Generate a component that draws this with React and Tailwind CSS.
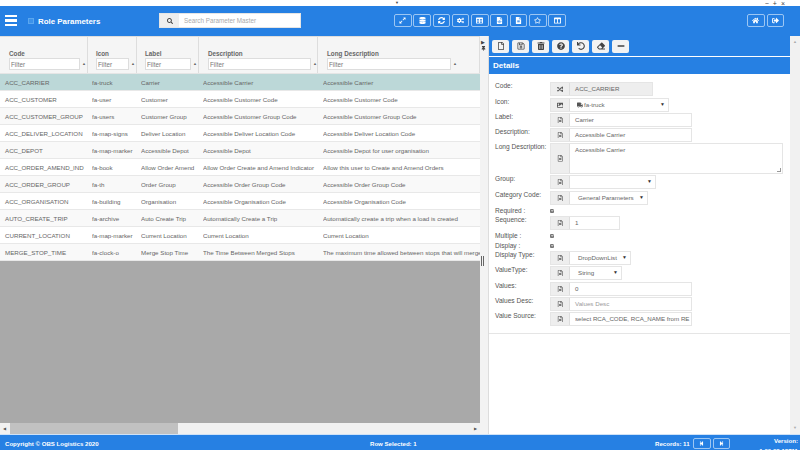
import {
  FaExpandAlt,
  FaDatabase,
  FaSyncAlt,
  FaCogs,
  FaTable,
  FaFileCode,
  FaFileAlt,
  FaRegStar,
  FaColumns,
  FaHome,
  FaSignOutAlt,
  FaRegFile,
  FaRegSave,
  FaTrashAlt,
  FaQuestionCircle,
  FaUndo,
  FaEraser,
  FaMinus,
  FaSearch,
  FaRandom,
  FaTruck,
  FaStepBackward,
  FaStepForward,
  FaThumbtack,
  FaImage,
  FaRegFileAlt,
  FaCheck,
} from "react-icons/fa";

const columns = [
  { name: "Code", width: "w-[88px]", left: "ml-[9px]", filter: "w-[71px]" },
  { name: "Icon", width: "w-[49px]", left: "ml-[8px]", filter: "w-[33px]" },
  { name: "Label", width: "w-[62px]", left: "ml-[8px]", filter: "w-[46px]" },
  { name: "Description", width: "w-[119px]", left: "ml-[9px]", filter: "w-[103px]" },
  { name: "Long Description", width: "w-[162px]", left: "ml-[9px]", filter: "w-[124px]" },
];

const rows = [
  ["ACC_CARRIER", "fa-truck", "Carrier", "Accessible Carrier", "Accessible Carrier"],
  ["ACC_CUSTOMER", "fa-user", "Customer", "Accessible Customer Code", "Accessible Customer Code"],
  ["ACC_CUSTOMER_GROUP", "fa-users", "Customer Group", "Accessible Customer Group Code", "Accessible Customer Group Code"],
  ["ACC_DELIVER_LOCATION", "fa-map-signs", "Deliver Location", "Accessible Deliver Location Code", "Accessible Deliver Location Code"],
  ["ACC_DEPOT", "fa-map-marker", "Accessible Depot", "Accessible Depot", "Accessible Depot for user organisation"],
  ["ACC_ORDER_AMEND_IND", "fa-book", "Allow Order Amend", "Allow Order Create and Amend Indicator", "Allow this user to Create and Amend Orders"],
  ["ACC_ORDER_GROUP", "fa-th", "Order Group", "Accessible Order Group Code", "Accessible Order Group Code"],
  ["ACC_ORGANISATION", "fa-building", "Organisation", "Accessible Organisation Code", "Accessible Organisation Code"],
  ["AUTO_CREATE_TRIP", "fa-archive", "Auto Create Trip", "Automatically Create a Trip", "Automatically create a trip when a load is created"],
  ["CURRENT_LOCATION", "fa-map-marker", "Current Location", "Current Location", "Current Location"],
  ["MERGE_STOP_TIME", "fa-clock-o", "Merge Stop Time", "The Time Between Merged Stops", "The maximum time allowed between stops that will merge"],
];

const headerButtons = [FaExpandAlt, FaDatabase, FaSyncAlt, FaCogs, FaTable, FaFileCode, FaFileAlt, FaRegStar, FaColumns];
const toolButtons = [FaRegFile, FaRegSave, FaTrashAlt, FaQuestionCircle, FaUndo, FaEraser, FaMinus];

const OutlineButton = ({ icon: Icon }) => (
  <button className="flex h-[13px] w-[17.5px] items-center justify-center rounded-[2px] border border-[#9cc6f3] text-white">
    <Icon className="text-[7px]" />
  </button>
);

// label + addon + control, same row layout for every field
const Field = ({ label, width, icon: Icon = FaRegFileAlt, disabled, children }) => (
  <div className="flex h-[15px] shrink-0 items-start">
    <label className="w-[55px] text-[6.6px] leading-[8px] whitespace-nowrap text-[#555]">{label}</label>
    <div className={`flex h-[14px] ${width} border border-[#e5e5e5] ${disabled ? "bg-[#eee]" : "bg-white"}`}>
      <span className="flex w-[19px] shrink-0 items-center justify-center border-r border-[#ddd] bg-[#eee] text-[#555]">
        <Icon className="text-[6.5px]" />
      </span>
      <div className="flex min-w-0 flex-1 items-center pl-[5px] text-[6.2px] text-[#666]">{children}</div>
    </div>
  </div>
);

const SelectBody = ({ children, pad = "pl-[3px]" }) => (
  <div className={`flex w-full items-center justify-between pr-[3px] ${pad}`}>
    <span className="flex items-center gap-[1px] whitespace-nowrap">{children}</span>
    <span className="text-[5px] text-[#333]">▼</span>
  </div>
);

const CheckRow = ({ label }) => (
  <div className="flex h-[10px] shrink-0 items-center pb-[1px]">
    <span className="w-[55px] text-[6.6px] whitespace-nowrap text-[#555]">{label}</span>
    <span className="flex h-[4px] w-[4px] items-center justify-center rounded-[1px] bg-[#777] text-white">
      <FaCheck className="text-[3px]" />
    </span>
  </div>
);

const App = () => {
  return (
    <div className="flex h-[450px] w-[800px] flex-col overflow-hidden bg-white font-['Liberation_Sans',Arial,sans-serif]">
      {/* window strip */}
      <div className="relative flex h-[6px] shrink-0 items-center justify-end gap-[4px] pr-[15px] text-[7px] leading-none text-[#444]">
        <span className="absolute left-[395px] top-[1px] text-[4px]">▼</span>
        <span>−</span>
        <span>+</span>
        <span>×</span>
      </div>

      {/* header */}
      <div className="flex h-[30px] shrink-0 items-center bg-[#2680e3] pb-[1px]">
        <div className="ml-[5px] flex w-[12px] flex-col gap-[2px]">
          <span className="h-[2.5px] bg-white" />
          <span className="h-[2.5px] bg-white" />
          <span className="h-[2.5px] bg-white" />
        </div>
        <span className="ml-[11px] h-[6px] w-[6px] border border-[#5aa7f0] bg-[#3c92ea]" />
        <span className="ml-[4px] w-[121px] pt-[3px] text-[7.9px] font-bold text-white">Role Parameters</span>
        <div className="flex h-[15px] w-[142px] border border-[#e5e5e5] bg-white">
          <span className="flex w-[19px] items-center justify-center bg-[#eee] text-[#444]">
            <FaSearch className="text-[6px]" />
          </span>
          <input
            readOnly
            placeholder="Search Parameter Master"
            className="min-w-0 flex-1 bg-white pl-[5px] text-[6.3px] outline-none placeholder:text-[#aaa]"
          />
        </div>
        <div className="ml-[93px] flex gap-[1.8px]">
          {headerButtons.map((Icon, i) => (
            <OutlineButton key={i} icon={Icon} />
          ))}
        </div>
        <div className="ml-auto mr-[16px] flex gap-[2px]">
          <OutlineButton icon={FaHome} />
          <OutlineButton icon={FaSignOutAlt} />
        </div>
      </div>

      <div className="flex min-h-0 flex-1">
        {/* grid side */}
        <div className="flex w-[480px] shrink-0 flex-col border-t border-[#ddd]">
          <div className="flex h-[37px] shrink-0 overflow-hidden border-b border-[#e5e5e5] bg-[#f5f5f5]">
            {columns.map((c) => (
              <div key={c.name} className={`${c.width} shrink-0 border-r border-[#ddd] pt-[13px]`}>
                <div className={`${c.left} text-[6.3px] leading-[8px] font-bold text-[#666]`}>{c.name}</div>
                <div className={`${c.left} flex items-center`}>
                  <input
                    readOnly
                    placeholder="Filter"
                    className={`${c.filter} h-[12px] border border-[#ddd] bg-white pl-[1px] text-[6.3px] outline-none placeholder:text-[#777]`}
                  />
                  <span className="ml-[2px] text-[4px] text-[#666]">▲</span>
                </div>
              </div>
            ))}
          </div>
          <div className="shrink-0">
            {rows.map((r, i) => (
              <div
                key={r[0]}
                className={`flex h-[17px] items-center border-b border-[#e8e8e8] pt-[1px] text-[6.2px] whitespace-nowrap text-[#666] ${
                  i === 0 ? "bg-[#bcd8d8]" : i % 2 ? "bg-white" : "bg-[#f9f9f9]"
                }`}
              >
                <div className="w-[92px] shrink-0 overflow-hidden pl-[5px]">{r[0]}</div>
                <div className="w-[49px] shrink-0 overflow-hidden">{r[1]}</div>
                <div className="w-[62px] shrink-0 overflow-hidden">{r[2]}</div>
                <div className="w-[120px] shrink-0 overflow-hidden">{r[3]}</div>
                <div className="w-[157px] shrink-0 overflow-hidden">{r[4]}</div>
              </div>
            ))}
          </div>
          <div className="flex-1 bg-[#a9a9a9]" />
          <div className="flex h-[11px] shrink-0 items-center bg-[#f1f1f1] text-[#555]">
            <span className="w-[10px] pl-[3px] text-[4px]">◀</span>
            <div className="h-full w-[168px] bg-[#c1c1c1]" />
            <span className="ml-auto pr-[3px] text-[4px]">▶</span>
          </div>
        </div>

        {/* splitter */}
        <div className="relative w-[8px] shrink-0 bg-[#f3f3f3]">
          <span className="absolute left-[1px] top-[3px] text-[5px] text-[#444]">▶</span>
          <FaThumbtack className="absolute left-[1px] top-[10px] text-[5px] text-[#444]" />
          <div className="absolute left-[1px] top-[220px] flex gap-[1px]">
            <span className="h-[10px] w-[1px] bg-[#666]" />
            <span className="h-[10px] w-[1px] bg-[#666]" />
          </div>
        </div>

        {/* details side */}
        <div className="flex w-[302px] shrink-0 flex-col border-l border-[#ddd]">
          <div className="flex h-[20px] shrink-0 items-center gap-[3px] bg-[#2680e3] pl-[3px]">
            {toolButtons.map((Icon, i) => (
              <button key={i} className="flex h-[13px] w-[17px] items-center justify-center rounded-[2px] bg-[#f3f3f3] text-[#444]">
                <Icon className="text-[8px]" />
              </button>
            ))}
          </div>
          <div className="mt-[1px] flex h-[17px] shrink-0 items-center bg-[#2680e3] pl-[4px] text-[8px] font-bold text-white">Details</div>
          <div className="flex h-[260px] shrink-0 flex-col border-b border-[#e5e5e5] pt-[8px] pl-[6px]">
            <Field label="Code:" width="w-[103px]" icon={FaRandom} disabled>
              ACC_CARRIER
            </Field>
            <div className="h-[1px]" />
            <Field label="Icon:" width="w-[119px]" icon={FaImage}>
              <SelectBody pad="pl-[2px]">
                <FaTruck className="text-[6px] text-[#555]" />
                fa-truck
              </SelectBody>
            </Field>
            <Field label="Label:" width="w-[142px]">Carrier</Field>
            <Field label="Description:" width="w-[142px]">Accessible Carrier</Field>
            <div className="flex h-[32px] shrink-0">
              <label className="w-[55px] text-[6.6px] leading-[8px] whitespace-nowrap text-[#555]">Long Description:</label>
              <div className="relative flex h-[31px] w-[233px] border border-[#e5e5e5]">
                <span className="flex w-[19px] shrink-0 items-center justify-center border-r border-[#ddd] bg-[#eee] text-[#555]">
                  <FaRegFileAlt className="text-[6.5px]" />
                </span>
                <div className="pt-[1px] pl-[5px] text-[6.2px] text-[#666]">Accessible Carrier</div>
                <span className="absolute right-[1px] bottom-[1px] h-[4px] w-[4px] border-r border-b border-[#999]" />
              </div>
            </div>
            <Field label="Group:" width="w-[106px]">
              <SelectBody />
            </Field>
            <div className="h-[1px]" />
            <Field label="Category Code:" width="w-[98px]">
              <SelectBody>General Parameters</SelectBody>
            </Field>
            <CheckRow label="Required :" />
            <Field label="Sequence:" width="w-[70px]">1</Field>
            <CheckRow label="Multiple :" />
            <CheckRow label="Display :" />
            <Field label="Display Type:" width="w-[81px]">
              <SelectBody>DropDownList</SelectBody>
            </Field>
            <Field label="ValueType:" width="w-[72px]">
              <SelectBody>String</SelectBody>
            </Field>
            <div className="h-[1px]" />
            <Field label="Values:" width="w-[142px]">0</Field>
            <Field label="Values Desc:" width="w-[142px]">
              <span className="text-[#999]">Values Desc</span>
            </Field>
            <Field label="Value Source:" width="w-[142px]">
              <span className="overflow-hidden whitespace-nowrap">select RCA_CODE, RCA_NAME from RE</span>
            </Field>
          </div>
        </div>

        {/* page scrollbar */}
        <div className="flex w-[10px] shrink-0 flex-col items-center justify-between bg-[#f1f1f1] py-[3px] text-[4px] text-[#aaa]">
          <span>▲</span>
          <span>▼</span>
        </div>
      </div>

      {/* footer */}
      <div className="flex h-[16px] shrink-0 items-center overflow-hidden border-t border-[#cfe2f7] bg-[#2680e3] text-[6.1px] font-bold text-white">
        <span className="w-[370px] pt-[2px] pl-[5px]">Copyright © OBS Logistics 2020</span>
        <span className="w-[285px] pt-[2px]">Row Selected: 1</span>
        <span className="w-[38px] pt-[2px]">Records: 11</span>
        <div className="flex gap-[2px] pt-[2px]">
          <button className="flex h-[11px] w-[17.5px] items-center justify-center rounded-[2px] border border-[#9cc6f3]">
            <FaStepBackward className="text-[5px]" />
          </button>
          <button className="flex h-[11px] w-[17.5px] items-center justify-center rounded-[2px] border border-[#9cc6f3]">
            <FaStepForward className="text-[5px]" />
          </button>
        </div>
        <span className="ml-auto self-start pt-[1px] pr-[2px] text-right leading-[10px]">
          Version:
          <br />
          1.00.03.18711
        </span>
      </div>
    </div>
  );
};

export default App;
